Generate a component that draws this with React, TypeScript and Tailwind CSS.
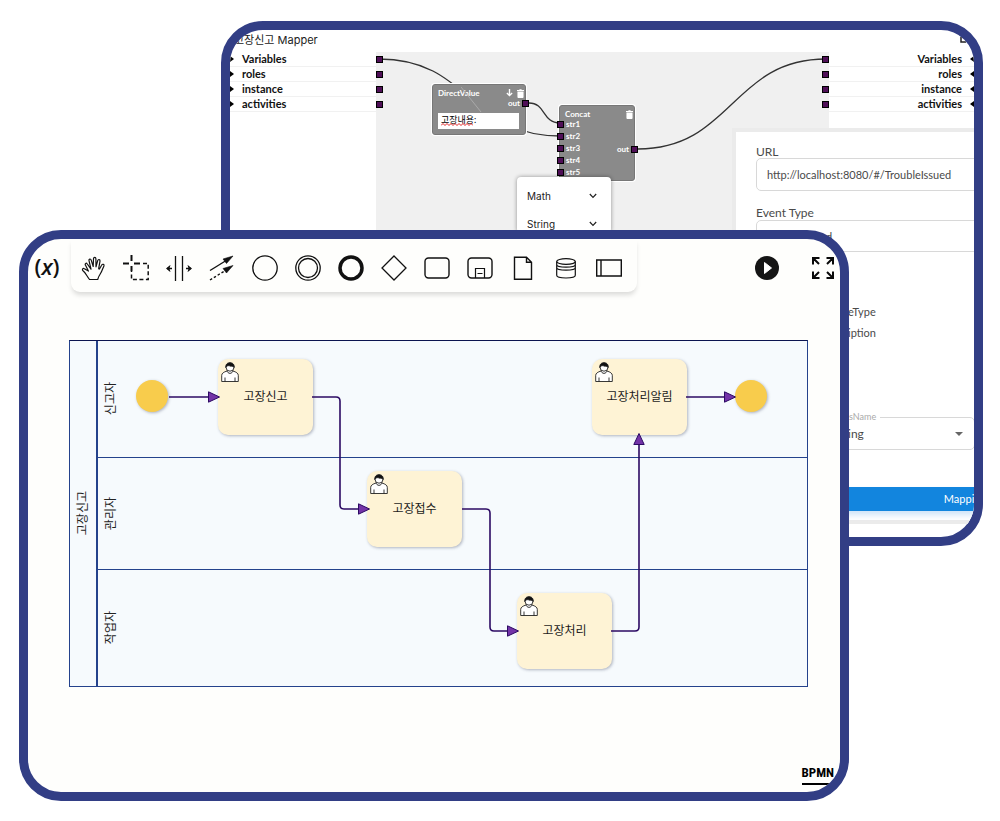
import React from "react";

const TREE = ["Variables", "roles", "instance", "activities"];

function Port({ className = "" }: { className?: string }) {
  return <span className={`block size-[7px] shrink-0 border border-black bg-[#4f0f57] ${className}`} />;
}

function TrashIcon() {
  return (
    <svg viewBox="0 0 8 10" className="h-[9px] w-[7px]" fill="white">
      <path d="M0 1h2.5l.5-1h2l.5 1H8v1H0zM.5 2.6h7V9q0 1-1 1h-5q-1 0-1-1z" />
    </svg>
  );
}

function Chevron() {
  return (
    <svg viewBox="0 0 8 6" className="h-[6px] w-2" fill="none" stroke="#222" strokeWidth="1.2">
      <path d="M.8 1 4 4.4 7.2 1" />
    </svg>
  );
}

function MapperCanvas() {
  return (
    <div className="relative flex-1 bg-[#f0f0f0]">
      <svg className="absolute left-0 top-0 h-48 w-[453px]" viewBox="0 0 453 192" fill="none" stroke="#333" strokeWidth="1.3">
        <path d="M3 7C94 7 93 84 184 84" />
        <path d="M153 51C170 51 166 71 184 71" />
        <path d="M262 97C356 97 356 7 450 7" />
      </svg>
      <div className="absolute left-0 top-1 flex flex-col gap-2">
        {TREE.map((t) => <Port key={t} />)}
      </div>
      <div className="absolute right-0 top-1 flex flex-col gap-2">
        {TREE.map((t) => <Port key={t} />)}
      </div>

      <div className="absolute left-14 top-8 h-[51px] w-[94px] rounded-[3px] border border-[#777] bg-[#8a8a8a] px-[5px] text-[8px] font-bold leading-3 text-white ring-1 ring-white">
        <div className="-mr-1 flex items-center pt-[2px]">
          <span className="flex-1">DirectValue</span>
          <svg viewBox="0 0 8 9" className="mr-1 h-2 w-[7px]" fill="none" stroke="white" strokeWidth="1.6">
            <path d="M4 0v7M1 4.5l3 3 3-3" />
          </svg>
          <TrashIcon />
        </div>
        <div className="-mt-[2px] text-right leading-[12px]">out</div>
        <Port className="absolute -right-1 top-[15px]" />
        <input
          aria-label="DirectValue"
          defaultValue="고장내용:"
          className="mt-1 block h-4 w-[81px] bg-white px-[3px] pb-[3px] text-[9px] font-normal leading-3 text-black"
        />
        <svg className="absolute left-2 top-[38px] h-[3px] w-8" viewBox="0 0 32 3" fill="none" stroke="#e02020" strokeWidth="1">
          <path d="M0 2.500l2-2 2 2 2-2 2 2 2-2 2 2 2-2 2 2 2-2 2 2 2-2 2 2 2-2 2 2 2-2 2 2" />
        </svg>
        <svg className="absolute left-7 top-0 h-7 w-6" viewBox="0 0 24 28" fill="none" stroke="#a9a9a9" strokeWidth="1">
          <path d="M0 2 20 27" />
        </svg>
      </div>

      <div className="absolute left-[183px] top-[53px] h-[76px] w-[76px] rounded-[3px] border border-[#777] bg-[#8a8a8a] px-[5px] text-[8px] font-bold leading-3 text-white ring-1 ring-white">
        <div className="-mr-1 flex items-center justify-between pt-[2px]">
          <span>Concat</span>
          <TrashIcon />
        </div>
        <div className="-mt-[2px]">
          {["str1", "str2", "str3", "str4", "str5"].map((s) => (
            <div key={s} className="-ml-2 flex items-center gap-[2px]">
              <Port />
              {s}
            </div>
          ))}
        </div>
        <div className="absolute -right-1 top-[37px] flex items-center gap-[2px]">
          out
          <Port />
        </div>
      </div>

      <div className="absolute left-[141px] top-[125px] w-[94px] rounded bg-white px-[10px] font-[Inter] text-[10px] font-normal text-[#222] shadow-[0_0_4px_rgba(0,0,0,0.4)]">
        {["Math", "String"].map((s, i) => (
          <button key={s} className={`flex w-full items-center justify-between pr-1 ${i ? "h-[18px]" : "h-[38px]"}`}>
            {s}
            <Chevron />
          </button>
        ))}
      </div>
    </div>
  );
}

function EventPanel() {
  return (
    <form className="absolute -right-[228px] top-[98px] h-[396px] w-[470px] border-4 border-[#ebebeb] bg-white pt-[10px] text-[#4a4a4a]">
      <div className="pl-5">
        <label htmlFor="url" className="block h-4 text-[12px] leading-5">URL</label>
        <input
          id="url"
          defaultValue="http://localhost:8080/#/TroubleIssued"
          className="block h-[33px] w-full rounded-[5px] border border-[#d8d8d8] px-[10px] text-[11px]"
        />
        <label htmlFor="event" className="mt-[13px] block h-4 text-[12px] leading-[18px]">Event Type</label>
        <input
          id="event"
          defaultValue="d"
          className="block h-8 w-full rounded-[5px] border border-[#d8d8d8] pl-[69px] text-[11px]"
        />
        <ul className="mt-[49px] pl-[92px] text-[11px] leading-[21px]">
          <li>eType</li>
          <li>iption</li>
        </ul>
        <div className="relative mt-[74px] w-[219px]">
          <label htmlFor="cls" className="absolute -top-[6px] left-[91px] bg-white pl-[2px] pr-1 text-[9px] leading-3 text-[#aaa]">sName</label>
          <select id="cls" className="block h-[33px] w-full appearance-none rounded-[5px] border border-[#d8d8d8] pl-[91px] text-[12px]">
            <option>ing</option>
          </select>
          <svg viewBox="0 0 8 4" className="absolute right-3 top-[15px] h-1 w-2" fill="#666">
            <path d="M0 0h8L4 4z" />
          </svg>
        </div>
      </div>
      <button type="button" className="mt-[37px] block h-6 w-full bg-[#1285de] pr-1 text-[11px] text-white shadow-[0_4px_6px_#cfe4f8]">
        Mapping
      </button>
    </form>
  );
}

function MapperWindow() {
  return (
    <section className="relative ml-[221px] mr-[17px] mt-[21px] h-[525px] overflow-hidden rounded-[42px] border-[9px] border-[#323e85] bg-white font-[Lato,'Noto_Sans_CJK_KR',sans-serif] [grid-area:1/1]">
      <header className="flex h-[22px] items-center justify-between px-1 pb-[2px] font-[Inter,'Noto_Sans_CJK_KR'] text-[11px] leading-4 text-[#222]">
        <h2>고장신고 Mapper</h2>
        <svg viewBox="0 0 6 6" className="mr-1 size-[6px]" fill="none" stroke="#222" strokeWidth="1.5">
          <path d="M1 0v5h5" />
        </svg>
      </header>
      <div className="flex h-full text-[11px] font-bold leading-[13px] text-[#111]">
        <ul className="w-[146px]">
          {TREE.map((t) => (
            <li key={t} className="flex h-[15px] items-center gap-2 border-b border-[#f1f1f1] pb-px">
              <svg viewBox="0 0 4 6" className="h-[6px] w-1"><path d="M0 0l4 3-4 3z" /></svg>
              {t}
            </li>
          ))}
        </ul>
        <MapperCanvas />
        <ul className="w-[145px]">
          {TREE.map((t) => (
            <li key={t} className="flex h-[15px] items-center justify-end gap-2 border-b border-[#f1f1f1] pb-px">
              {t}
              <svg viewBox="0 0 4 6" className="h-[6px] w-1"><path d="M4 0 0 3l4 3z" /></svg>
            </li>
          ))}
        </ul>
      </div>
      <EventPanel />
    </section>
  );
}

const TOOLS: { name: string; icon: React.ReactNode }[] = [
  {
    name: "Hand",
    icon: (
      <path strokeWidth="1.2" strokeLinejoin="round" d="M9.500 24.500h8.200c.8-3 1.600-4.200 2.800-6 1.400-2.200 2.200-4.700 3.400-7.600.6-1.700-1.500-2.300-2.300-.7l-2 3.500c-.4.6-1 .3-.9-.4l1.300-7.200c.3-1.800-1.800-2.200-2.300-.5l-1.700 6.200-.1-8.100c-.1-1.800-2.300-1.700-2.400.1l-.3 7.700-2-6.400c-.6-1.800-2.600-1.200-2.200.6l2 8.500-3.700-5.200c-1-1.500-2.700-.4-1.900 1.100l3 6-4-2.300c-1.600-1-2.700.8-1.400 2 2.800 2.200 3.300 4.600 6.500 8.700z" />
    ),
  },
  {
    name: "Lasso",
    icon: (
      <>
        <path strokeWidth="2" d="M8.500 0v6M8.500 11v5M0 8.500h6M11 8.500h6" />
        <path strokeWidth="1.5" strokeDasharray="4 2.500" d="M20 8.500h5.200V24.500H8.500V16" />
      </>
    ),
  },
  {
    name: "Space",
    icon: (
      <>
        <path strokeWidth="1.3" d="M9.500 1v25M16.500 1v25M1 13.500h5M20 13.500h5" />
        <path fill="#111" stroke="none" d="M0 13.500l4.500-3.700-1 3.700 1 3.700zM26 13.500l-4.500-3.700 1 3.700-1 3.700z" />
      </>
    ),
  },
  {
    name: "Connect",
    icon: (
      <>
        <path strokeWidth="1.400" d="M1 15.500 18 5" />
        <path strokeWidth="1.400" strokeDasharray="2.500 2" d="M1 25 18 14.500" />
        <path fill="#111" strokeWidth=".6" d="M24 1l-10 3 3.500 4.500zM24 10.500l-10 3 3.500 4.500z" />
      </>
    ),
  },
  { name: "Start event", icon: <circle cx="13" cy="13" r="12.200" strokeWidth="1.300" /> },
  {
    name: "Intermediate event",
    icon: (
      <>
        <circle cx="13" cy="13" r="12.200" strokeWidth="1.300" />
        <circle cx="13" cy="13" r="9.500" strokeWidth="1.300" />
      </>
    ),
  },
  { name: "End event", icon: <circle cx="13" cy="13" r="11" strokeWidth="3.500" /> },
  { name: "Gateway", icon: <path strokeWidth="1.300" d="M13 1l12 12-12 12L1 13z" /> },
  { name: "Task", icon: <rect x="1" y="3" width="24" height="20" rx="3.500" strokeWidth="1.400" /> },
  {
    name: "Subprocess",
    icon: (
      <>
        <rect x="1" y="3" width="24" height="20" rx="3.500" strokeWidth="1.400" />
        <path strokeWidth="1.200" d="M8.500 23v-9.500h9V23M10.500 18.500h5" />
      </>
    ),
  },
  { name: "Data object", icon: <path strokeWidth="1.400" d="M4.500 2.200h12L21.500 7.200v17h-17zM16.500 2.200v5h5" /> },
  {
    name: "Data store",
    icon: (
      <>
        <ellipse cx="13" cy="6.500" rx="9.300" ry="2.800" strokeWidth="1.200" />
        <path strokeWidth="1.200" d="M3.700 6.500v13.800c0 3.600 18.600 3.600 18.600 0V6.500M3.700 9.500c0 3.600 18.600 3.600 18.600 0M3.700 12.500c0 3.600 18.600 3.600 18.600 0" />
      </>
    ),
  },
  { name: "Participant", icon: <path strokeWidth="1.400" d="M.7 5h24.600v16H.7zM5 5v16" /> },
];

function Toolbar() {
  return (
    <header className="flex h-[54px] items-start">
      <button className="h-[54px] w-[43px] shrink-0 pr-[5px] text-center font-['Open_Sans'] text-[22px] font-semibold leading-[54px] text-[#111]">
        (<i>x</i>)
      </button>
      <nav className="flex h-[53px] items-center gap-[17px] rounded-b-[9px] bg-[#fefefc] pb-0 pl-[9px] pr-[15px] pt-[5px] shadow-[0_4px_5px_-1px_rgba(0,0,0,0.14)]">
        {TOOLS.map((t) => (
          <button key={t.name} aria-label={t.name} className="size-[26px]">
            <svg viewBox="0 0 26 26" className="size-[26px]" fill="none" stroke="#111">{t.icon}</svg>
          </button>
        ))}
      </nav>
      <div className="ml-auto flex items-center gap-8 pr-[5px] pt-[17px]">
        <button aria-label="Play">
          <svg viewBox="0 0 24 24" className="size-6">
            <circle cx="12" cy="12" r="12" fill="#151515" />
            <path d="M9.500 6.500v11L16.500 12z" fill="white" stroke="white" strokeLinejoin="round" />
          </svg>
        </button>
        <button aria-label="Full screen">
          <svg viewBox="0 0 24 24" className="size-6" fill="none" stroke="#0a0a0a" strokeWidth="2">
            <path d="M2 8.500V2h6.500M2 2l6 6M15.500 2H22v6.500M22 2l-6 6M2 15.500V22h6.500M2 22l6-6M22 15.500V22h-6.500M22 22l-6-6" />
          </svg>
        </button>
      </div>
    </header>
  );
}

function Task({ label, className }: { label: string; className: string }) {
  return (
    <div className={`absolute flex h-[76px] w-[95px] items-center justify-center rounded-[10px] bg-[#fef3d5] pb-px text-[12px] text-[#1c1c1c] shadow-[1px_1px_3px_rgba(40,50,80,0.35)] ${className}`}>
      <svg viewBox="0 0 18 20" className="absolute left-[3px] top-[3px] h-5 w-[18px]" fill="white" stroke="#222" strokeWidth=".9">
        <path d="M.7 19.500v-6.200c0-2 2-3.200 5.300-4.300h6c3.300 1.100 5.300 2.300 5.300 4.300v6.200zM4 19.500v-4M14 19.500v-4" />
        <path d="M6 8.500c.5 3.800 5.500 3.800 6 0" />
        <circle cx="9" cy="5.200" r="4" />
        <path fill="#111" d="M4.800 5.500C4 -1 14 -1 13.200 5.500 12 3.500 10 4.800 8.500 3.800 7 3.400 5.500 4 4.800 5.500z" />
      </svg>
      {label}
    </div>
  );
}

const LANES = [
  { name: "신고자", size: "h-[117px]" },
  { name: "관리자", size: "h-[112px]" },
  { name: "작업자", size: "h-[116px]" },
];

function Diagram() {
  return (
    <div className="relative ml-[41px] mr-8 mt-[47px] min-w-[739px]">
      <div className="flex border border-[#24428c] border-t-[#0b1450] bg-[#f6fafd] text-[12px] text-[#222]">
        <div className="flex w-7 items-center justify-center border-r-2 border-[#24428c]">
          <span className="rotate-180 [text-orientation:sideways] [writing-mode:vertical-rl]">고장신고</span>
        </div>
        <div className="flex-1 divide-y divide-[#24428c]">
          {LANES.map((l) => (
            <div key={l.name} className={`flex items-center pl-1 ${l.size}`}>
              <span className="rotate-180 [text-orientation:sideways] [writing-mode:vertical-rl]">{l.name}</span>
            </div>
          ))}
        </div>
      </div>
      <span className="absolute left-[67px] top-10 size-8 rounded-full bg-[#f8cc4c] shadow-[1px_1px_3px_rgba(40,50,80,0.35)]" />
      <span className="absolute left-[666px] top-10 size-8 rounded-full bg-[#f8cc4c] shadow-[1px_1px_3px_rgba(40,50,80,0.35)]" />
      <Task label="고장신고" className="left-[149px] top-[19px]" />
      <Task label="고장접수" className="left-[298px] top-[131px]" />
      <Task label="고장처리" className="left-[448px] top-[253px]" />
      <Task label="고장처리알림" className="left-[523px] top-[19px]" />
      <svg viewBox="0 0 739 347" className="absolute left-0 top-0 h-[347px] w-[739px]" fill="none" stroke="#2c0a63" strokeWidth="1.600">
        <path d="M100 57h40" />
        <path d="M243 57h24q4 0 4 4v104q0 4 4 4h15" />
        <path d="M393 169h24q4 0 4 4v114q0 4 4 4h14" />
        <path d="M542 291h24q4 0 4-4V103" />
        <path d="M617 57h40" />
        <g fill="#7333a8" strokeWidth="1">
          <path d="M139.500 51.800v10.400L150.500 57z" />
          <path d="M289.500 163.800v10.400L300.500 169z" />
          <path d="M438.500 285.800v10.400L449.500 291z" />
          <path d="M564.800 104.500h10.400L570 93.500z" />
          <path d="M655.500 51.800v10.400L666.500 57z" />
        </g>
      </svg>
    </div>
  );
}

function ModelerWindow() {
  return (
    <section className="relative z-10 mb-5 ml-[19px] mr-[151px] mt-[230px] flex flex-col overflow-hidden rounded-[42px] border-[9px] border-[#323e85] bg-[#fefefc] [grid-area:1/1]">
      <Toolbar />
      <Diagram />
      <footer className="flex justify-end pb-[7px] pr-[6px] pt-[76px]">
        <a href="#bpmn" className="border-b-2 border-black font-['Liberation_Sans_Narrow','Roboto_Condensed',Roboto,sans-serif] text-[13px] font-bold leading-5 text-black">
          BPMN
        </a>
      </footer>
    </section>
  );
}

export default function App() {
  return (
    <main className="grid min-h-screen items-start overflow-hidden bg-white font-[Inter,'Noto_Sans_CJK_KR',sans-serif]">
      <MapperWindow />
      <ModelerWindow />
    </main>
  );
}
